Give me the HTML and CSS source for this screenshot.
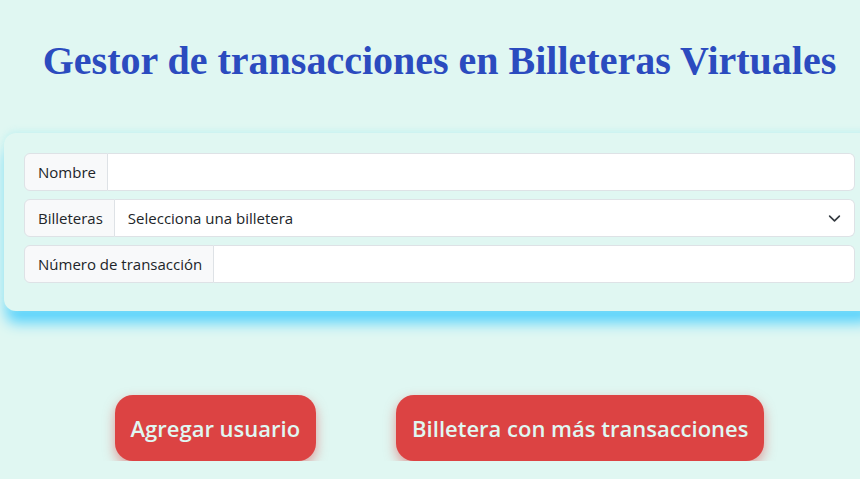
FILE: index.html
```html
<!DOCTYPE html>
<html lang="es">
<head>
<meta charset="utf-8">
<link rel="stylesheet" href="styles.css">
<title>Gestor</title>
</head>
<body>
<div class="page">
  <h1 class="title">Gestor de transacciones en Billeteras Virtuales</h1>
  <div class="card">
    <div class="group">
      <span class="group-label">Nombre</span>
      <input class="control" type="text">
    </div>
    <div class="group">
      <span class="group-label">Billeteras</span>
      <div class="control select">
        <span>Selecciona una billetera</span>
        <svg class="chev" width="16" height="16" viewBox="0 0 16 16"><path d="M2 5l6 6 6-6" fill="none" stroke="#343a40" stroke-width="2" stroke-linecap="round" stroke-linejoin="round"/></svg>
      </div>
    </div>
    <div class="group">
      <span class="group-label">Número de transacción</span>
      <input class="control" type="text">
    </div>
  </div>
  <div class="actions">
    <button class="btn">Agregar usuario</button>
    <button class="btn">Billetera con más transacciones</button>
  </div>
</div>
</body>
</html>
```
FILE: styles.css
```css
html, body {
  margin: 0;
  padding: 0;
  overflow: hidden;
  background: #e0f7f2;
}
body {
  font-family: "Open Sans", "Noto Sans", sans-serif;
  color: #212529;
}
.page {
  width: 871px;
  margin-left: 4px;
}
.title {
  margin: 0;
  padding-top: 36px;
  height: 96px;
  box-sizing: border-box;
  text-align: center;
  font-family: "Liberation Serif", serif;
  font-weight: bold;
  font-size: 40px;
  line-height: 50px;
  color: #2b4bbf;
}
.card {
  margin-top: 37px;
  background: #e0f7f2;
  border-radius: 12px;
  padding: 20px 20px 28px;
  display: flex;
  flex-direction: column;
  gap: 8px;
  box-shadow: 0 -2px 6px rgba(190, 240, 240, 0.8), 0 14px 14px -2px #5ad3fc;
}
.group {
  display: flex;
  height: 38px;
}
.group-label {
  display: flex;
  align-items: center;
  padding: 0 11px 0 13px;
  background: #f8f9fa;
  border: 1px solid #dee2e6;
  border-radius: 6px 0 0 6px;
  font-size: 15px;
  color: #212529;
  white-space: nowrap;
}
.control {
  flex: 1;
  box-sizing: border-box;
  height: 38px;
  background: #fff;
  border: 1px solid #dee2e6;
  border-left: none;
  border-radius: 0 6px 6px 0;
  font-family: inherit;
  font-size: 15px;
  padding: 0 12px;
  outline: none;
}
.select {
  display: flex;
  align-items: center;
  justify-content: space-between;
  padding: 0 13px 0 13px;
}
.chev {
  width: 13px;
  height: 13px;
}
.actions {
  display: flex;
  justify-content: center;
  gap: 80px;
  margin-top: 84px;
}
.btn {
  background: #dc4343;
  color: #e0f7f2;
  border: none;
  border-radius: 18px;
  height: 66px;
  padding: 0 16px;
  font-family: "Open Sans", sans-serif;
  font-weight: 600;
  font-size: 22px;
  box-shadow: 0 5px 12px rgba(220, 67, 67, 0.5);
}
```
